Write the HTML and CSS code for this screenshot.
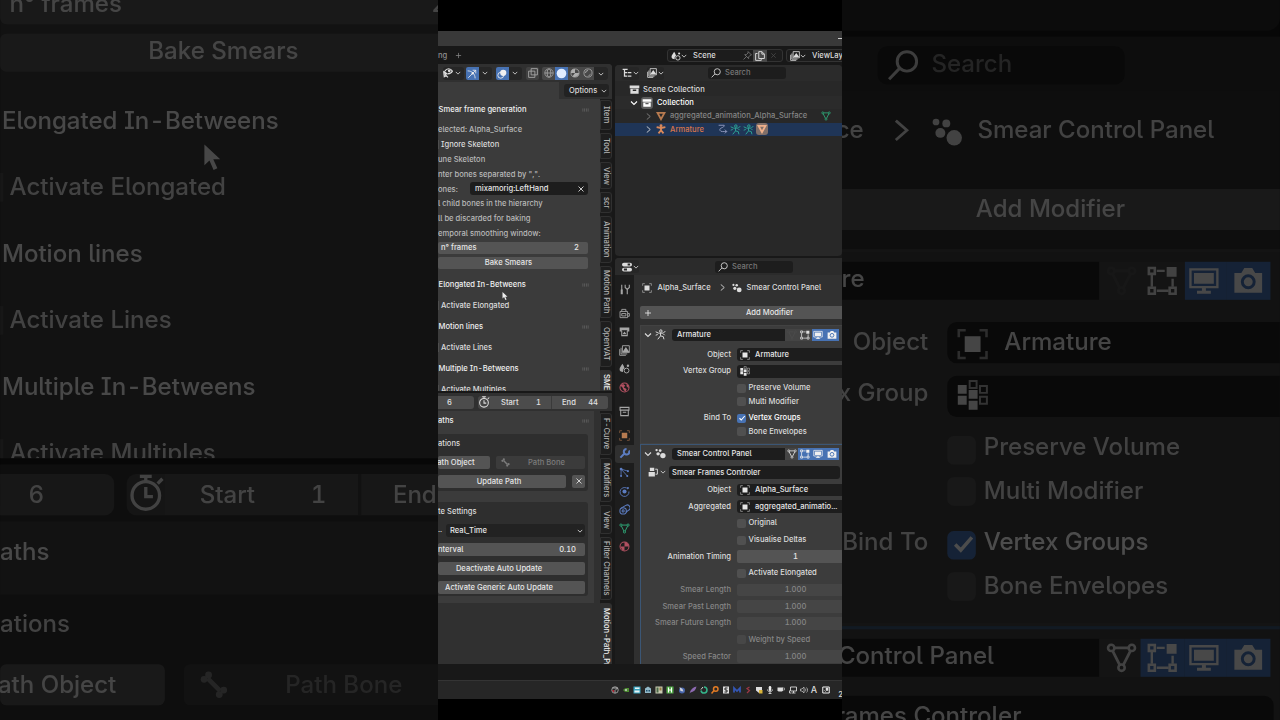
FILE: index.html
```html
<!DOCTYPE html>
<html lang="en">
<head>
  <meta charset="UTF-8">
  <meta name="viewport" content="width=device-width, initial-scale=1.0">
  <title>Smear Control Panel</title>
  <link rel="stylesheet" href="styles.css">
</head>
<body>
  <svg class="sprite" aria-hidden="true">
    <symbol id="down" viewBox="0 0 16 16"><path d="M2 5l6 6 6-6" fill="none" stroke="currentColor" stroke-width="2.2"/></symbol>
    <symbol id="right" viewBox="0 0 16 16"><path d="M4 1l8 7-8 7" fill="none" stroke="currentColor" stroke-width="2"/></symbol>
    <symbol id="close" viewBox="0 0 16 16"><path d="M3 3l10 10M13 3L3 13" fill="none" stroke="currentColor" stroke-width="1.7"/></symbol>
    <symbol id="plus" viewBox="0 0 16 16"><path d="M8 2v12M2 8h12" fill="none" stroke="currentColor" stroke-width="1.7"/></symbol>
    <symbol id="search" viewBox="0 0 16 16"><g fill="none" stroke="currentColor" stroke-width="1.5"><circle cx="10" cy="6" r="4.9"/><path d="M6.3 9.5L1 15"/></g></symbol>
    <symbol id="grip" viewBox="0 0 16 8"><path d="M1 2h2M5 2h2M9 2h2M13 2h2M1 6h2M5 6h2M9 6h2M13 6h2" stroke="currentColor" stroke-width="1.6"/></symbol>
    <symbol id="eye" viewBox="0 0 16 16"><path d="M3 5c3-5 9-5 12 0-2 4-5 4-7 4M1 5l1 9 3-2 3 3" fill="none" stroke="currentColor" stroke-width="1.8"/><circle cx="10" cy="4.5" r="2.3" fill="currentColor"/><path d="M1 4l8 6-4 .5L3 14z" fill="currentColor"/></symbol>
    <symbol id="gizmo" viewBox="0 0 16 16"><g fill="none" stroke="currentColor" stroke-width="1.3"><path d="M1 3c7 0 12 5 12 12M2 14L14 2M9 2h5v5"/></g><circle cx="9" cy="7" r="1.8" fill="currentColor"/></symbol>
    <symbol id="overlay" viewBox="0 0 16 16"><circle cx="10" cy="6" r="5" fill="currentColor"/><circle cx="6" cy="10" r="4.7" fill="none" stroke="currentColor" stroke-width="1.4"/></symbol>
    <symbol id="xray" viewBox="0 0 16 16"><g fill="none" stroke="currentColor" stroke-width="1.4"><path d="M5 1h10v10H5zM1 5h10v10H1z"/></g></symbol>
    <symbol id="wire" viewBox="0 0 16 16"><g fill="none" stroke="currentColor" stroke-width="1.2"><circle cx="8" cy="8" r="6.7"/><ellipse cx="8" cy="8" rx="3" ry="6.7"/><path d="M1.3 8h13.4"/></g></symbol>
    <symbol id="solid" viewBox="0 0 16 16"><circle cx="8" cy="8" r="7" fill="currentColor"/></symbol>
    <symbol id="matball" viewBox="0 0 16 16"><circle cx="8" cy="8" r="6.5" fill="none" stroke="currentColor" stroke-width="1.2"/><path d="M8 1.5v6.5h6.5A6.5 6.5 0 0 1 4 13L8 8H1.5A6.5 6.5 0 0 1 8 1.5z" fill="currentColor"/></symbol>
    <symbol id="rendered" viewBox="0 0 16 16"><circle cx="8" cy="8" r="6.5" fill="none" stroke="currentColor" stroke-width="1.3"/><path d="M4 8a4 4 0 0 1 4-4M12 10a5 5 0 0 1-3 2" fill="none" stroke="currentColor" stroke-width="1.5"/></symbol>
    <symbol id="clock" viewBox="0 0 16 16"><g fill="none" stroke="currentColor" stroke-width="1.4"><circle cx="8" cy="9" r="5.8"/><path d="M8 5.5V9.5h3M5.5 1h5M8 1v2M13 4l2-2"/></g></symbol>
    <symbol id="bone" viewBox="0 0 16 16"><path d="M4.500 4.500l7 7" stroke="currentColor" stroke-width="2.600"/><g fill="currentColor"><circle cx="5" cy="2.500" r="1.900"/><circle cx="2.500" cy="5" r="1.900"/><circle cx="13.500" cy="11" r="1.900"/><circle cx="11" cy="13.500" r="1.900"/></g></symbol>
    <symbol id="scene" viewBox="0 0 16 16"><path d="M5 1c2 3 3 5 3 7-3 1-2 5-2 5-6 0-5-4-5-5s2-4 4-7z" fill="currentColor"/><circle cx="11" cy="11" r="3.5" fill="none" stroke="currentColor" stroke-width="1.4"/><circle cx="13" cy="4" r="1.7" fill="currentColor"/></symbol>
    <symbol id="pin" viewBox="0 0 16 16"><path d="M9 1l6 6-2 .5-3 3 0 3-7-7h3l3-3zM6 10l-5 5" fill="none" stroke="currentColor" stroke-width="1.3"/></symbol>
    <symbol id="copy" viewBox="0 0 16 16"><path d="M6 1h5l4 4v7H6zM11 1v4h4M4 4H1v11h9v-2" fill="none" stroke="currentColor" stroke-width="1.5"/></symbol>
    <symbol id="layers" viewBox="0 0 16 16"><path d="M5 1h10v10H5zM3 4v9h9M1 6v9h9" fill="none" stroke="currentColor" stroke-width="1.3"/><path d="M5 10l5-7 5 7z" fill="currentColor"/></symbol>
    <symbol id="tree" viewBox="0 0 16 16"><path d="M1 2h8M4 2v11h4M4 7.5h4M9 7.5h6M9 13h6" fill="none" stroke="currentColor" stroke-width="2"/></symbol>
    <symbol id="box" viewBox="0 0 16 16"><path d="M1 2h14v4H1zM2 7h12v7H2zM5.5 8v2h5V8z" fill="currentColor" fill-rule="evenodd"/></symbol>
    <symbol id="boxline" viewBox="0 0 16 16"><path d="M1.5 2h13v4h-13zM2.5 6v8h11V6M5.5 9h5" fill="none" stroke="currentColor" stroke-width="1.5"/></symbol>
    <symbol id="meshsolid" viewBox="0 0 16 16"><path d="M2.5 3h11L8 13z" fill="none" stroke="currentColor" stroke-width="3"/></symbol>
    <symbol id="mesh" viewBox="0 0 16 16"><path d="M4.5 3h7M3.5 4.5L7 11.5M12.5 4.5L9 11.5" fill="none" stroke="currentColor" stroke-width="1.4"/><g fill="none" stroke="currentColor" stroke-width="1.3"><circle cx="2.8" cy="3" r="1.6"/><circle cx="13.2" cy="3" r="1.6"/><circle cx="8" cy="13" r="1.6"/></g></symbol>
    <symbol id="arm" viewBox="0 0 16 16"><circle cx="8" cy="2.8" r="2.3" fill="currentColor"/><path d="M1 5l5 1h4l5-1M8 6v4l-4 5M8 10l4 5" fill="none" stroke="currentColor" stroke-width="3"/></symbol>
    <symbol id="man" viewBox="0 0 16 16"><g fill="none" stroke="currentColor" stroke-width="1.4"><circle cx="8.5" cy="3" r="1.8"/><path d="M1 4l4 2h7l3-3M8 6v4l-4 5M8 10l4 1 1 4M1 9l3-1M12 7l2 2"/></g></symbol>
    <symbol id="anim" viewBox="0 0 16 16"><path d="M1 2h9c0 5-8 3-7 8 1 3 7 2 11 2M11 9l3 3-3 3" fill="none" stroke="currentColor" stroke-width="1.6"/></symbol>
    <symbol id="props" viewBox="0 0 16 16"><path d="M3 1h10a3 3 0 0 1 0 6H3a3 3 0 0 1 0-6zM3 9h10a3 3 0 0 1 0 6H3a3 3 0 0 1 0-6zM9 2.5v3h4v-3zM3 10.5v3h5v-3z" fill="currentColor" fill-rule="evenodd"/></symbol>
    <symbol id="tools" viewBox="0 0 16 16"><path d="M4 1v8M12 8v7M9 1v4l3 3 3-3V1" fill="none" stroke="currentColor" stroke-width="1.6"/><path d="M2.5 8h3v7h-3z" fill="currentColor"/></symbol>
    <symbol id="render" viewBox="0 0 16 16"><path d="M1.500 5h11v9h-11zM4 5V2h6v3M13 8h2v4h-2M4 8h6v3.500H4z" fill="none" stroke="currentColor" stroke-width="1.300"/></symbol>
    <symbol id="printer" viewBox="0 0 16 16"><path d="M1 2h14v6h-3V6H4v2H1z" fill="currentColor"/><path d="M4 7v7h8V7" fill="none" stroke="currentColor" stroke-width="1.5"/><path d="M5 12l3-4 3 4z" fill="currentColor"/></symbol>
    <symbol id="world" viewBox="0 0 16 16"><circle cx="8" cy="8" r="6.6" fill="none" stroke="currentColor" stroke-width="1.5"/><path d="M2 5l4-2 3 2-2 3 4 2-1 4-3-2-2-4zM11 2l3 3v4l-3-3z" fill="currentColor"/></symbol>
    <symbol id="object" viewBox="0 0 16 16"><path d="M4 4h8v8H4z" fill="currentColor"/><path d="M1 4.5V1h3.5M11.5 1H15v3.5M15 11.5V15h-3.5M4.5 15H1v-3.5" fill="none" stroke="currentColor" stroke-opacity=".6" stroke-width="1.3"/></symbol>
    <symbol id="wrench" viewBox="0 0 16 16"><path d="M2 14l7-7M14.5 3.5A4 4 0 1 1 11 1.5" fill="none" stroke="currentColor" stroke-width="3"/></symbol>
    <symbol id="particles" viewBox="0 0 16 16"><path d="M3 3l10 3M3 3l9 10M3 3v10" fill="none" stroke="currentColor" stroke-width="1.2"/><g fill="currentColor"><circle cx="3" cy="3" r="2"/><circle cx="13" cy="6" r="1.5"/><circle cx="12" cy="13" r="1.5"/><circle cx="3" cy="13" r="1.5"/></g></symbol>
    <symbol id="physics" viewBox="0 0 16 16"><path d="M13 4.5A6.5 6.5 0 1 0 14.5 8" fill="none" stroke="currentColor" stroke-width="1.3"/><circle cx="8" cy="8" r="3" fill="currentColor"/><circle cx="13" cy="3" r="1.5" fill="currentColor"/></symbol>
    <symbol id="constraint" viewBox="0 0 16 16"><g fill="none" stroke="currentColor" stroke-width="1.5"><circle cx="6" cy="10" r="4.7"/><circle cx="6" cy="10" r="1.5"/><path d="M3 6l7-4a4 4 0 0 1 4 7l-4 3"/></g></symbol>
    <symbol id="material" viewBox="0 0 16 16"><circle cx="8" cy="8" r="6.5" fill="none" stroke="currentColor" stroke-width="1.5"/><path d="M8 1.5v6.5h6.5A6.5 6.5 0 0 0 8 1.5zM8 8H2l3 5.5 3 .5z" fill="currentColor"/></symbol>
    <symbol id="smear" viewBox="0 0 16 16"><g fill="currentColor"><circle cx="11.5" cy="11" r="3.9"/><circle cx="4.5" cy="8.500" r="2.500"/><circle cx="2.3" cy="3" r="1.7"/><circle cx="7.5" cy="3.7" r="2"/></g></symbol>
    <symbol id="vgroup" viewBox="0 0 16 16"><path d="M.5 3h4.500v4.500H.5zM.5 8.500h4.500v4.500H.5zM6 5.500h4.500V10H6zM6 11h4.500v4.500H6z" fill="currentColor"/><path d="M6.500 1h3.500v3.500H6.500zM11.700 3.500h3.500V7h-3.500zM11.700 9h3.500v3.500h-3.500z" fill="none" stroke="currentColor" stroke-opacity=".7"/></symbol>
    <symbol id="editmode" viewBox="0 0 16 16"><path d="M10 1h5v5h-5z" fill="currentColor"/><path d="M5 3h4M2.5 5v6M5 13h6M13 7v4" stroke="currentColor" stroke-width="1.2"/><g fill="none" stroke="currentColor" stroke-width="1.3"><path d="M1 1.5h3v3H1zM1 11.5h3v3H1zM11.5 11.5h3v3h-3z"/></g></symbol>
    <symbol id="monitor" viewBox="0 0 16 16"><path d="M1.2 2.2h13.6v9H1.2z" fill="none" stroke="currentColor" stroke-width="1.2"/><path d="M3 4h10v5.5H3zM7 11h2v2h2.5v1.5h-7V13H7z" fill="currentColor"/></symbol>
    <symbol id="camera" viewBox="0 0 16 16"><path d="M1 4h3.5l1.5-2.5h4L11.5 4H15v10H1z" fill="currentColor"/><circle cx="8" cy="8.5" r="3" fill="none" stroke="#4772b3" stroke-width="1.5"/></symbol>
    <symbol id="nodes" viewBox="0 0 16 16"><path d="M3 1h7v5.500H3zM1 8h10v7H1z" fill="currentColor"/><path d="M11.500 3.500H15v8h-3" fill="none" stroke="currentColor" stroke-width="1.500"/></symbol>
    <symbol id="check" viewBox="0 0 16 16"><path d="M3 8.5l3.5 3.5L13.5 4" fill="none" stroke="currentColor" stroke-width="2.2"/></symbol>
    <symbol id="pointer" viewBox="0 0 12 18"><path d="M1 1v13l3.2-3 2.6 6 2.4-1-2.6-5.7H11z" fill="#ededed"/></symbol>
    <!-- tray -->
    <symbol id="t-no" viewBox="0 0 16 16"><circle cx="8" cy="8" r="6.5" fill="none" stroke="#bbb" stroke-width="1.5"/><path d="M3 4h10L8 9v5" fill="none" stroke="#ccc" stroke-width="1.5"/><path d="M2 8l5 1-2 4z" fill="#c23"/></symbol>
    <symbol id="t-gpu" viewBox="0 0 16 16"><path d="M2 8c4-5 8-4 12-4v8C9 12 6 13 2 8z" fill="#4c8b30"/><circle cx="8" cy="8" r="2" fill="#ccc"/></symbol>
    <symbol id="t-disk" viewBox="0 0 16 16"><path d="M1 1h14v14H1z" fill="#38a3bf"/><path d="M4 3h9v3H4zM3 9h10v4H3z" fill="#e8f3f5"/></symbol>
    <symbol id="t-bot" viewBox="0 0 16 16"><path d="M2 5l6-4 6 4v9H2z" fill="#93b9c9"/><path d="M4 8h3v3H4zM9 8h3v3H9z" fill="#20516b"/></symbol>
    <symbol id="t-map" viewBox="0 0 16 16"><path d="M1 1h14v14H1z" fill="#c8cbb2"/><path d="M3 3h4v10H3z" fill="#4b6646"/><path d="M9 3h4v6H9z" fill="#977a43"/></symbol>
    <symbol id="t-h" viewBox="0 0 16 16"><path d="M1 1h14v14H1z" fill="#56ad4c"/><path d="M5 3v10M11 3v10M5 8h6" stroke="#fff" stroke-width="2"/></symbol>
    <symbol id="t-blue" viewBox="0 0 16 16"><circle cx="8" cy="9" r="6" fill="#4664aa"/><path d="M3 2l6 4 2 5-6-1z" fill="#cfd2dd"/></symbol>
    <symbol id="t-feather" viewBox="0 0 16 16"><path d="M1 15C3 7 8 2 15 1c-1 7-6 11-12 12z" fill="#8c69b0"/></symbol>
    <symbol id="t-ring" viewBox="0 0 16 16"><path d="M8 2a6 6 0 1 1-6 7" fill="none" stroke="#35b48a" stroke-width="3"/><path d="M2 7l4-5" stroke="#ddd" stroke-width="2"/></symbol>
    <symbol id="t-key" viewBox="0 0 16 16"><circle cx="9.5" cy="6" r="4.5" fill="none" stroke="#e27b24" stroke-width="3"/><path d="M6 9l-5 6" stroke="#e27b24" stroke-width="3"/></symbol>
    <symbol id="t-note" viewBox="0 0 16 16"><path d="M2 1h12v14H2z" fill="#ddd"/><path d="M11 4H6v4h4v4H5" fill="none" stroke="#222" stroke-width="2"/></symbol>
    <symbol id="t-m" viewBox="0 0 16 16"><path d="M2 13V4l6 6 6-6v9" fill="none" stroke="#3456b3" stroke-width="3.5"/></symbol>
    <symbol id="t-red" viewBox="0 0 16 16"><path d="M11 2L6 5l5 4-5 5" fill="none" stroke="#9b3744" stroke-width="2.5"/></symbol>
    <symbol id="t-shield" viewBox="0 0 16 16"><path d="M2 2h12v7l-6 5-6-5z" fill="#ddd"/><path d="M8 8h7v7H8z" fill="#d9b43b"/></symbol>
    <symbol id="t-mic" viewBox="0 0 16 16"><rect x="5.5" y="0" width="5" height="10" rx="2.5" fill="#eee"/><path d="M3 7c0 6 10 6 10 0M8 11v4M5 15h6" fill="none" stroke="#eee" stroke-width="1.5"/></symbol>
    <symbol id="t-cup" viewBox="0 0 16 16"><path d="M1 3h11v6l-2 2H3L1 9z" fill="#ddd"/><path d="M11 4h4v4h-4" fill="none" stroke="#aaa" stroke-width="1.5"/></symbol>
    <symbol id="t-net" viewBox="0 0 16 16"><path d="M3 2h12v8H3zM9 10v4M5 14h8M1 9v5h3" fill="none" stroke="#eee" stroke-width="1.6"/></symbol>
    <symbol id="t-vol" viewBox="0 0 16 16"><path d="M1 6h3l4-4v12l-4-4H1zM10 5c2 2 2 4 0 6M13 3c3 4 3 7 0 10" fill="none" stroke="#ccc" stroke-width="1.4"/></symbol>
    <symbol id="t-chat" viewBox="0 0 16 16"><path d="M1.5 2h13v12h-13z" fill="none" stroke="#eee" stroke-width="2"/><path d="M8 4h4v5H8zM4 8l4 4" fill="#ddd" stroke="#ddd"/></symbol>
  </svg>

  <div class="backdrop" aria-hidden="true"></div>

  <main class="screen">
    <div class="titlebar"><span class="minimize"></span></div>

    <div class="topbar">
      <span class="workspace">ng</span>
      <svg class="icon i7 dim"><use href="#plus"/></svg>
      <div class="picker scene-picker">
        <svg class="icon i10"><use href="#scene"/></svg><svg class="icon i6"><use href="#down"/></svg>
        <span class="picker-name">Scene</span>
        <svg class="icon i9 dim"><use href="#pin"/></svg>
        <span class="picker-copy"><svg class="icon i10"><use href="#copy"/></svg></span>
        <svg class="icon i7 faint"><use href="#close"/></svg>
      </div>
      <div class="picker layer-picker">
        <svg class="icon i10"><use href="#layers"/></svg><svg class="icon i6"><use href="#down"/></svg>
        <span class="picker-name">ViewLayer</span>
      </div>
    </div>

    <div class="workspace-area">
      <div class="left">
        <section class="viewport">
          <div class="view-header">
            <span class="hbtn"><svg class="icon i10"><use href="#eye"/></svg><svg class="icon i6"><use href="#down"/></svg></span>
            <span class="hbtn split"><span class="on"><svg class="icon i10"><use href="#gizmo"/></svg></span><svg class="icon i6"><use href="#down"/></svg></span>
            <span class="hbtn split"><span class="on"><svg class="icon i10"><use href="#overlay"/></svg></span><svg class="icon i6"><use href="#down"/></svg></span>
            <span class="xray"><svg class="icon i10"><use href="#xray"/></svg></span>
            <span class="shading">
              <span><svg class="icon i10"><use href="#wire"/></svg></span>
              <span class="on"><svg class="icon i11"><use href="#solid"/></svg></span>
              <span><svg class="icon i10"><use href="#matball"/></svg></span>
              <span><svg class="icon i10"><use href="#rendered"/></svg></span>
              <i><svg class="icon i6"><use href="#down"/></svg></i>
            </span>
          </div>
          <div class="options-row"><span class="options">Options <svg class="icon i6"><use href="#down"/></svg></span></div>
          <div class="split-body">
            <div class="panel">
              <h2>Smear frame generation<svg class="grip"><use href="#grip"/></svg></h2>
              <div class="lines">
                <p class="soft">elected: Alpha_Surface</p>
                <p class="tick-row">Ignore Skeleton</p>
                <p class="soft">une Skeleton</p>
                <p class="soft">nter bones separated by ",".</p>
                <p class="soft">ones:<span class="input bones">mixamorig:LeftHand<svg class="icon i8"><use href="#close"/></svg></span></p>
                <p class="soft">l child bones in the hierarchy</p>
                <p class="soft">ll be discarded for baking</p>
                <p class="soft">emporal smoothing window:</p>
                <p><span class="bar spread frames"><span>n° frames</span><span>2</span></span></p>
                <p><span class="bar bake">Bake Smears</span></p>
              </div>
              <h2>Elongated In-Betweens<svg class="grip"><use href="#grip"/></svg></h2>
              <div class="lines"><p class="tick-row">Activate Elongated</p></div>
              <h2>Motion lines<svg class="grip"><use href="#grip"/></svg></h2>
              <div class="lines"><p class="tick-row">Activate Lines</p></div>
              <h2>Multiple In-Betweens<svg class="grip"><use href="#grip"/></svg></h2>
              <div class="lines"><p class="tick-row">Activate Multiples</p></div>
              <svg class="pointer"><use href="#pointer"/></svg>
            </div>
            <nav class="tabs upper">
              <span>Item</span><span>Tool</span><span>View</span><span>scr</span><span>Animation</span><span>Motion Path</span><span>OpenVAT</span><span class="active">SMEAR</span>
            </nav>
          </div>
        </section>

        <section class="timeline">
          <div class="time-header">
            <span class="cell current">6</span>
            <span class="range">
              <svg class="icon i12"><use href="#clock"/></svg>
              <span class="cell start"><span>Start</span><span>1</span></span>
              <span class="cell end"><span>End</span><span>44</span></span>
            </span>
          </div>
          <div class="split-body">
            <div class="side">
              <div class="path-panel">
                <h2>aths<svg class="grip"><use href="#grip"/></svg></h2>
                <div class="group">
                  <h3>ations</h3>
                  <div class="buttons">
                    <span class="bar path-object">ath Object</span>
                    <span class="bar off path-bone"><svg class="icon i9"><use href="#bone"/></svg><b>Path Bone</b></span>
                  </div>
                  <div class="buttons">
                    <span class="bar update">Update Path</span>
                    <span class="bar clear"><svg class="icon i8"><use href="#close"/></svg></span>
                  </div>
                </div>
                <div class="group">
                  <h3>te Settings</h3>
                  <div class="buttons mode"><span class="dots">..</span><span class="input realtime">Real_Time<svg class="icon i6"><use href="#down"/></svg></span></div>
                  <div class="buttons"><span class="bar spread interval"><span>nterval</span><span>0.10</span></span></div>
                  <div class="buttons"><span class="bar wide">Deactivate Auto Update</span></div>
                  <div class="buttons"><span class="bar wide">Activate Generic Auto Update</span></div>
                </div>
              </div>
            </div>
            <nav class="tabs lower">
              <span>F-Curve</span><span>Modifiers</span><span>View</span><span>Filter Channels</span><span class="active">Motion-Path_Pro</span>
            </nav>
          </div>
        </section>
      </div>

      <div class="right">
        <section class="outliner">
          <div class="editor-header">
            <span class="hbtn"><svg class="icon i10"><use href="#tree"/></svg><svg class="icon i6"><use href="#down"/></svg></span>
            <span class="hbtn"><svg class="icon i10"><use href="#layers"/></svg><svg class="icon i6"><use href="#down"/></svg></span>
            <span class="search"><svg class="icon i10"><use href="#search"/></svg>Search</span>
          </div>
          <div class="tree">
            <div class="row root"><svg class="icon i11"><use href="#box"/></svg>Scene Collection</div>
            <div class="row coll"><svg class="icon i8"><use href="#down"/></svg><span class="chip"><svg class="icon i10"><use href="#box"/></svg></span>Collection</div>
            <div class="row child muted"><svg class="icon i7"><use href="#right"/></svg><svg class="icon i10 brown"><use href="#meshsolid"/></svg><span class="name">aggregated_animation_Alpha_Surface</span><svg class="icon i10 green"><use href="#mesh"/></svg></div>
            <div class="row child selected"><svg class="icon i7"><use href="#right"/></svg><svg class="icon i10 orange"><use href="#arm"/></svg><span class="name">Armature</span>
              <span class="links"><svg class="icon i10 lilac"><use href="#anim"/></svg><svg class="icon i11 teal"><use href="#man"/></svg><svg class="icon i11 teal"><use href="#man"/></svg><span class="chip warm"><svg class="icon i10"><use href="#meshsolid"/></svg></span></span></div>
          </div>
        </section>

        <section class="properties">
          <div class="editor-header">
            <span class="hbtn"><svg class="icon i10"><use href="#props"/></svg><svg class="icon i6"><use href="#down"/></svg></span>
            <span class="search"><svg class="icon i10"><use href="#search"/></svg>Search</span>
          </div>
          <div class="props-body">
            <nav class="prop-tabs">
              <span class="apart"><svg class="icon i11"><use href="#tools"/></svg></span>
              <span><svg class="icon i11"><use href="#render"/></svg></span>
              <span><svg class="icon i11"><use href="#printer"/></svg></span>
              <span><svg class="icon i11"><use href="#layers"/></svg></span>
              <span><svg class="icon i11"><use href="#scene"/></svg></span>
              <span class="apart red"><svg class="icon i11"><use href="#world"/></svg></span>
              <span class="apart"><svg class="icon i11"><use href="#boxline"/></svg></span>
              <span class="brown"><svg class="icon i11"><use href="#object"/></svg></span>
              <span class="active blue"><svg class="icon i11"><use href="#wrench"/></svg></span>
              <span class="blue"><svg class="icon i11"><use href="#particles"/></svg></span>
              <span class="blue"><svg class="icon i11"><use href="#physics"/></svg></span>
              <span class="blue"><svg class="icon i11"><use href="#constraint"/></svg></span>
              <span class="green"><svg class="icon i11"><use href="#mesh"/></svg></span>
              <span class="red"><svg class="icon i11"><use href="#material"/></svg></span>
            </nav>
            <div class="props-main">
              <div class="crumbs"><svg class="icon i10"><use href="#object"/></svg><span class="crumb">Alpha_Surface</span><svg class="icon i7"><use href="#right"/></svg><svg class="icon i10"><use href="#smear"/></svg><span>Smear Control Panel</span></div>
              <div class="bar add-modifier"><svg class="icon i8"><use href="#plus"/></svg><b>Add Modifier</b></div>

              <article class="modifier">
                <header>
                  <svg class="icon i8"><use href="#down"/></svg><svg class="icon i11"><use href="#man"/></svg>
                  <span class="input title">Armature</span>
                  <span class="modes"><span class="faint"><svg class="icon i10"><use href="#mesh"/></svg></span><span><svg class="icon i10"><use href="#editmode"/></svg></span><span class="on"><svg class="icon i10"><use href="#monitor"/></svg></span><span class="on"><svg class="icon i10"><use href="#camera"/></svg></span></span>
                </header>
                <div class="field gap"><label>Object</label><span class="input"><svg class="icon i10"><use href="#object"/></svg>Armature</span></div>
                <div class="field"><label>Vertex Group</label><span class="input"><svg class="icon i10"><use href="#vgroup"/></svg></span></div>
                <div class="field"><label></label><i class="box"></i>Preserve Volume</div>
                <div class="field tight"><label></label><i class="box"></i>Multi Modifier</div>
                <div class="field bind"><label>Bind To</label><i class="box checked"><svg class="icon i8"><use href="#check"/></svg></i><b>Vertex Groups</b></div>
                <div class="field tight"><label></label><i class="box"></i>Bone Envelopes</div>
              </article>

              <article class="modifier current-mod">
                <header>
                  <svg class="icon i8"><use href="#down"/></svg><svg class="icon i11"><use href="#smear"/></svg>
                  <span class="input title">Smear Control Panel</span>
                  <span class="modes"><span><svg class="icon i10"><use href="#mesh"/></svg></span><span class="on"><svg class="icon i10"><use href="#editmode"/></svg></span><span class="on"><svg class="icon i10"><use href="#monitor"/></svg></span><span class="on"><svg class="icon i10"><use href="#camera"/></svg></span></span>
                </header>
                <div class="node-group"><svg class="icon i10"><use href="#nodes"/></svg><svg class="icon i6"><use href="#down"/></svg><span class="input">Smear Frames Controler</span></div>
                <div class="field"><label>Object</label><span class="input"><svg class="icon i10"><use href="#object"/></svg>Alpha_Surface</span></div>
                <div class="field"><label>Aggregated</label><span class="input"><svg class="icon i10"><use href="#object"/></svg>aggregated_animatio...</span></div>
                <div class="field"><label></label><i class="box"></i>Original</div>
                <div class="field"><label></label><i class="box"></i>Visualise Deltas</div>
                <div class="field"><label>Animation Timing</label><span class="bar">1</span></div>
                <div class="field"><label></label><i class="box"></i>Activate Elongated</div>
                <div class="field disabled"><label>Smear Length</label><span class="bar">1.000</span></div>
                <div class="field disabled"><label>Smear Past Length</label><span class="bar">1.000</span></div>
                <div class="field disabled"><label>Smear Future Length</label><span class="bar">1.000</span></div>
                <div class="field disabled"><label></label><i class="box"></i>Weight by Speed</div>
                <div class="field disabled"><label>Speed Factor</label><span class="bar">1.000</span></div>
              </article>
            </div>
          </div>
        </section>
      </div>
    </div>

    <div class="taskbar">
      <svg class="icon"><use href="#t-no"/></svg>
      <svg class="icon"><use href="#t-gpu"/></svg>
      <svg class="icon"><use href="#t-disk"/></svg>
      <svg class="icon"><use href="#t-bot"/></svg>
      <svg class="icon"><use href="#t-map"/></svg>
      <svg class="icon"><use href="#t-h"/></svg>
      <svg class="icon"><use href="#t-blue"/></svg>
      <svg class="icon"><use href="#t-feather"/></svg>
      <svg class="icon"><use href="#t-ring"/></svg>
      <svg class="icon"><use href="#t-key"/></svg>
      <svg class="icon"><use href="#t-note"/></svg>
      <svg class="icon"><use href="#t-m"/></svg>
      <svg class="icon"><use href="#t-red"/></svg>
      <svg class="icon"><use href="#t-shield"/></svg>
      <svg class="icon"><use href="#t-mic"/></svg>
      <svg class="icon"><use href="#t-cup"/></svg>
      <svg class="icon"><use href="#t-net"/></svg>
      <svg class="icon"><use href="#t-vol"/></svg>
      <span class="lang">A</span>
      <svg class="icon chat"><use href="#t-chat"/></svg>
      <span class="time">2</span>
    </div>
  </main>

  <script>
    // the backdrop is a dimmed, enlarged copy of the screen
    var copy = document.querySelector(".screen").cloneNode(true);
    document.querySelector(".backdrop").appendChild(copy);
  </script>
</body>
</html>
```
FILE: styles.css
```css
* {
  box-sizing: border-box;
}

body {
  margin: 0;
  width: 1280px;
  height: 720px;
  overflow: hidden;
  position: relative;
  background: #000;
  color: #dcdcdc;
  font-family: Inter, "Liberation Sans", sans-serif;
  font-size: 7.6px;
  font-weight: 500;
  line-height: 12px;
  font-feature-settings: "tnum", "cv05", "cv08";
  white-space: nowrap;
}

h2, h3, p {
  margin: 0;
  font-size: inherit;
  font-weight: inherit;
}

b, i {
  font-weight: inherit;
  font-style: normal;
}

.sprite {
  position: absolute;
  width: 0;
  height: 0;
}

.screen {
  width: 404px;
  height: 720px;
  margin: 0 auto;
  padding: 31px 0 21px;
  background: #000;
  overflow: hidden;
  display: flex;
  flex-direction: column;
  position: relative;
}

.backdrop {
  position: absolute;
  inset: 0;
  overflow: hidden;
  filter: brightness(0.3);
}

.backdrop .screen {
  transform: scale(3.168);
}

/* icons */
.icon {
  width: 8px;
  height: 8px;
  flex: none;
  display: block;
}

.i6 { width: 6px; height: 6px; }
.i7 { width: 7px; height: 7px; }
.i8 { width: 8px; height: 8px; }
.i9 { width: 9px; height: 9px; }
.i10 { width: 10px; height: 10px; }
.i11 { width: 11px; height: 11px; }
.i12 { width: 12px; height: 12px; }

.dim { color: #858585; }
.faint { color: #4c4c4c; }
.brown { color: #b87b50; }
.orange { color: #d8885a; }
.green { color: #2fa878; }
.teal { color: #2ea596; }
.lilac { color: #8a93b8; }
.blue { color: #5c7cc0; }
.red { color: #b05060; }

/* window bars */
.titlebar {
  height: 15px;
  flex: none;
  background: #393939;
  display: flex;
  justify-content: flex-end;
  align-items: center;
}

.minimize {
  width: 4px;
  height: 1px;
  background: #ccc;
}

.topbar {
  height: 18px;
  flex: none;
  background: #181818;
  display: flex;
  align-items: center;
  padding-top: 1px;
}

.workspace {
  width: 17px;
  flex: none;
  padding-top: 1px;
  color: #8f8f8f;
}

.picker {
  height: 13px;
  flex: none;
  background: #1c1c1c;
  border: 1px solid #333;
  border-radius: 3px;
  display: flex;
  align-items: center;
}

.scene-picker {
  width: 116px;
  margin-left: 205px;
  padding-left: 3px;
}

.scene-picker .picker-name {
  width: 50px;
}

.picker-name {
  margin-left: 6px;
}

.picker-copy {
  width: 14px;
  height: 12px;
  margin: 0 3px 0 1px;
  padding: 1px 2px;
  background: #484848;
}

.layer-picker {
  width: 80px;
  margin-left: 3px;
  padding-left: 3px;
}

.workspace-area {
  height: 600px;
  flex: none;
  background: #181818;
  display: flex;
  gap: 3px;
}

.left {
  width: 174px;
  display: flex;
  flex-direction: column;
  gap: 2px;
}

.right {
  width: 227px;
  display: flex;
  flex-direction: column;
  gap: 2px;
  padding-top: 1px;
}

/* 3d viewport */
.viewport {
  height: 327px;
  background: #3b3b3b;
  border-radius: 0 4px 0 0;
  overflow: hidden;
}

.view-header {
  height: 18px;
  background: #303030;
  display: flex;
  align-items: center;
}

.hbtn {
  height: 13px;
  background: #262626;
  border-radius: 3px;
  display: flex;
  align-items: center;
}

.view-header .hbtn {
  width: 21px;
  gap: 2px;
  margin-left: 5px;
}

.view-header .split {
  width: 26px;
  gap: 3px;
  margin-left: 2px;
}

.view-header .split + .split {
  margin-left: 4px;
}

.on {
  background: #4772b3;
  color: #f0f0f0;
}

.split .on {
  width: 13px;
  height: 13px;
  padding: 2px 1px;
  border-radius: 2px 0 0 2px;
}

.xray {
  width: 13px;
  height: 13px;
  margin-left: 4px;
  padding: 1.5px;
  background: #404040;
  color: #a8a8a8;
  border-radius: 2px;
}

.shading {
  display: flex;
  height: 13px;
  margin-left: 3px;
  background: #484848;
  border-radius: 2px;
  overflow: hidden;
  color: #adadad;
}

.shading > span {
  width: 13px;
  display: flex;
  align-items: center;
  justify-content: center;
}

.shading .on {
  color: #e0ecff;
}

.shading i {
  width: 14px;
  padding: 4px;
  background: #262626;
  color: #dcdcdc;
}

.options-row {
  height: 17px;
  display: flex;
  justify-content: flex-end;
  background: linear-gradient(90deg, #3b3b3b 121px, #303030 121px);
  padding: 2px 3px 2px 0;
}

.options {
  width: 45px;
  background: #222;
  border-radius: 3px;
  display: flex;
  align-items: center;
  justify-content: space-between;
  padding: 0 2px 0 5px;
}

.split-body {
  display: flex;
}

.panel {
  width: 162px;
  height: 292px;
  overflow: hidden;
  position: relative;
}

.pointer {
  position: absolute;
  left: 64px;
  top: 192px;
  width: 6px;
  height: 10px;
}

h2 {
  height: 20px;
  padding: 1px 11px 0 .6px;
  color: #f0f0f0;
  display: flex;
  justify-content: space-between;
  align-items: center;
}

.grip {
  width: 7px;
  height: 4px;
  color: #8a8a8a;
}

.lines {
  padding: 3px 0 4px;
}

.lines p {
  height: 14.9px;
  padding-top: 1px;
  display: flex;
  align-items: center;
}

.lines .bar,
.lines .input {
  margin-top: -2px;
}

.soft {
  color: #b9b9b9;
}

.tick-row::before {
  content: "";
  width: 1px;
  height: 9px;
  margin: -1px 2px 0 0;
  background: #4d4d4d;
}

.input {
  height: 12.7px;
  padding-top: 1px;
  background: #1d1d1d;
  border-radius: 3px;
  display: flex;
  align-items: center;
  color: #e6e6e6;
}

.bones {
  width: 118px;
  margin-left: auto;
  margin-right: 12px;
  padding: 0 3px 0 5px;
  justify-content: space-between;
}

.bar {
  height: 12.7px;
  padding-top: 1px;
  background: #545454;
  border-radius: 2px;
  display: flex;
  align-items: center;
  justify-content: center;
  color: #e6e6e6;
}

.spread {
  justify-content: space-between;
}

.frames {
  width: 150px;
  padding: 0 9px 0 3px;
}

.bake {
  width: 150px;
  padding-right: 9px;
}

/* region tabs */
.tabs {
  width: 12px;
  background: #1a1a1a;
  display: flex;
  flex-direction: column;
  gap: 3px;
  overflow: hidden;
}

.tabs span {
  writing-mode: vertical-rl;
  flex: none;
  display: flex;
  align-items: center;
  justify-content: center;
  width: 12px;
  background: #1e1e1e;
  border: 1px solid #303030;
  border-radius: 0 3px 3px 0;
  color: #b4b4b4;
  line-height: 10px;
}

.tabs .active {
  background: #303030;
  color: #f0f0f0;
  justify-content: flex-start;
}

.upper { height: 292px; padding-top: 1px; }
.upper span:nth-child(1) { height: 30px; }
.upper span:nth-child(2) { height: 26px; }
.upper span:nth-child(3) { height: 27px; }
.upper span:nth-child(4) { height: 21px; }
.upper span:nth-child(5) { height: 47px; }
.upper span:nth-child(6) { height: 52px; }
.upper span:nth-child(7) { height: 46px; }
.upper span:nth-child(8) { height: 60px; padding-top: 3px; }

.lower { height: 253px; padding-top: 2px; }
.lower span:nth-child(1) { height: 42px; }
.lower span:nth-child(2) { height: 44px; }
.lower span:nth-child(3) { height: 29px; }
.lower span:nth-child(4) { height: 63px; }
.lower span:nth-child(5) { height: 90px; padding-top: 4px; }

/* timeline */
.timeline {
  height: 271px;
  background: #303030;
}

.time-header {
  height: 18px;
  padding-top: 1px;
  display: flex;
  align-items: center;
  gap: 4px;
}

.cell {
  height: 12.7px;
  background: #4c4c4c;
  color: #e0e0e0;
  display: flex;
  align-items: center;
  justify-content: space-between;
}

.current {
  width: 36px;
  padding: 1px 0 0 9px;
  border-radius: 0 3px 3px 0;
}

.range {
  width: 130px;
  background: #454545;
  border-radius: 3px;
  overflow: hidden;
  display: flex;
}

.start {
  width: 61px;
  padding: 1px 10px 0 11px;
}

.end {
  width: 57px;
  padding: 1px 10px 0 10px;
  border-left: 1px solid #3a3a3a;
}

.side {
  width: 162px;
  height: 253px;
}

.path-panel {
  width: 156px;
  height: 192px;
  background: #3b3b3b;
}

.path-panel h2 {
  height: 23px;
  padding: 0 5px 4px 0;
}

.group {
  width: 150px;
  height: 57px;
  background: #2e2e2e;
  border-radius: 0 3px 3px 0;
  padding-right: 3px;
}

.group + .group {
  height: 94px;
  margin-top: 11px;
}

h3 {
  height: 22px;
  padding-top: 4px;
}

.buttons {
  display: flex;
  gap: 6px;
  height: 19px;
}

.path-object { width: 52px; padding-right: 16px; }
.path-bone { width: 89px; padding-left: 5px; }
.path-bone b { flex: 1; text-align: center; padding-right: 2px; }
.update { width: 128px; padding-right: 6px; }
.clear { width: 13px; padding: 0; }
.wide { width: 147px; padding-right: 25px; }
.interval { width: 147px; padding-right: 9px; }

.off {
  background: #3b3b3b;
  color: #7c7c7c;
}

.mode {
  gap: 3px;
}

.dots {
  width: 5px;
}

.realtime {
  width: 139px;
  background: #222;
  justify-content: space-between;
  padding: 1px 2px 0 4px;
}

/* outliner and property editor */
.editor-header {
  height: 17px;
  background: #2b2b2b;
  display: flex;
  align-items: center;
  padding-left: 7px;
}

.editor-header .hbtn {
  width: 17px;
  gap: 1px;
  margin-right: 8px;
}

.search {
  width: 78px;
  height: 12px;
  padding-left: 3px;
  background: #1d1d1d;
  border-radius: 3px;
  display: flex;
  align-items: center;
  gap: 4px;
  color: #777;
}

.search .icon {
  color: #ccc;
}

.outliner .editor-header {
  height: 16px;
}

.outliner .search {
  margin-left: 36px;
}

.outliner {
  height: 191px;
  background: #282828;
  border-radius: 4px;
  overflow: hidden;
}

.tree {
  padding-top: 1.5px;
}

.row {
  height: 13.4px;
  padding-top: 1px;
  display: flex;
  align-items: center;
}

.row.root { padding-left: 14px; gap: 3px; }
.row.coll { padding-left: 15px; gap: 3px; background: #2b2b2b; color: #fff; }
.row.coll .chip { margin-right: 1px; }
.row.child { padding-left: 30px; gap: 4px; }
.row.child .brown, .row.child .orange { margin: 0 -1px 0 0; }
.row .name { margin-left: 1px; }

.muted { color: #858585; }
.muted .green { margin-left: 10px; }

.row.selected {
  background: #1f3557;
  padding-top: 0;
}

.selected .name {
  color: #d9764d;
  padding-top: 1px;
}

.links {
  display: flex;
  align-items: center;
  gap: 2.2px;
  margin-left: 10px;
}

.chip {
  width: 12px;
  height: 12px;
  padding: 1px;
  border-radius: 3px;
  background: #5c5c5c;
  color: #fff;
}

.warm {
  background: #806f69;
  color: #efb08b;
}

.properties {
  height: 406px;
  background: #303030;
  border-radius: 4px 0 0 0;
  overflow: hidden;
}

.properties .search {
  margin-left: 68px;
}

.props-body {
  display: flex;
}

.prop-tabs {
  width: 19px;
  height: 389px;
  padding-top: 5px;
  background: #1d1d1d;
}

.prop-tabs span {
  height: 18.6px;
  display: flex;
  align-items: center;
  justify-content: center;
}

.prop-tabs span:not([class]),
.prop-tabs .apart:not(.red) {
  color: #a6a6a6;
}

.prop-tabs .apart {
  margin-bottom: 5.3px;
}

.prop-tabs .active {
  background: #303030;
  border-radius: 3px 0 0 3px;
}

.props-main {
  width: 208px;
  padding-left: 6px;
  overflow: hidden;
}

.crumbs {
  height: 24px;
  padding: 1px 0 0 1.5px;
  display: flex;
  align-items: center;
}

.crumb {
  width: 61px;
  margin-left: 6px;
}

.crumbs .i7 {
  margin-right: 6px;
}

.crumbs span:last-child {
  margin-left: 5px;
}

.add-modifier {
  width: 204px;
  margin: 7px 0 6.8px;
  padding-left: 4px;
}

.add-modifier b {
  flex: 1;
  padding-left: 94px;
}

.modifier {
  width: 206px;
  height: 119px;
  background: #3c3c3c;
  border: 1px solid #424242;
  border-right: 0;
}

.modifier header {
  height: 17px;
  display: flex;
  align-items: center;
  padding-left: 3px;
  gap: 3px;
}

.title {
  width: 113px;
  margin-left: 3px;
  padding-left: 5px;
  border-radius: 3px 0 0 3px;
}

.modes {
  display: flex;
  margin-left: -3px;
}

.modes span {
  width: 13.4px;
  height: 12.7px;
  padding: 1.3px 1.7px;
  background-color: #444;
}

.modes .on {
  background-color: #4772b3;
}

.field {
  height: 16.65px;
  display: flex;
  align-items: center;
}

.field label {
  width: 90px;
  margin-right: 6px;
  text-align: right;
  flex: none;
}

.field.gap { margin-top: 3px; }
.field.tight { height: 13.5px; margin-top: -1.5px; }
.field.bind { margin-top: 1.5px; }
.field.bind b { color: #fff; }

.field .input {
  width: 120px;
  padding: 0 0 0 3px;
  gap: 5px;
}

.field .bar {
  width: 120px;
  padding: 0 0 0 8px;
}

.box {
  width: 9px;
  height: 9px;
  margin: 0 2.5px 0 0;
  border-radius: 2px;
  background: #505050;
}

.checked {
  background: #4772b3;
  color: #fff;
  padding: .5px;
}

.current-mod {
  height: 240px;
  border-color: #3b5675;
}

.node-group {
  height: 20px;
  margin: 0 0 -.7px;
  padding-left: 7px;
  display: flex;
  align-items: center;
  gap: 2px;
}

.node-group .input {
  width: 171px;
  margin-left: 1px;
  padding-left: 3px;
}

.disabled {
  color: #868686;
}

.disabled .bar {
  background: #454545;
  color: #868686;
}

.disabled .box {
  background: #474747;
}

/* taskbar */
.taskbar {
  height: 19px;
  flex: none;
  margin-top: 16px;
  padding-left: 173px;
  border-top: 1px solid #343434;
  background: #262626;
  display: flex;
  align-items: center;
  gap: 3.1px;
}

.screen::before {
  content: "";
  position: absolute;
  top: 664px;
  left: 0;
  width: 404px;
  height: 16px;
  background: #181818;
}

.lang {
  width: 8px;
  font-size: 9px;
  text-align: center;
}

.chat {
  margin-left: 2px;
}

.time {
  margin: 9px 0 0 5px;
  font-size: 7px;
}
```
